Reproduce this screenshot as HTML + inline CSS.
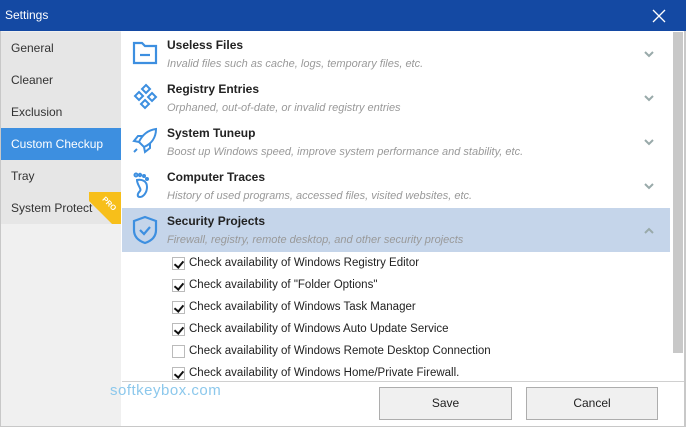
<!DOCTYPE html>
<html><head><meta charset="utf-8"><style>
*{margin:0;padding:0;box-sizing:border-box}
body{width:686px;height:427px;overflow:hidden;background:#fff;font-family:"Liberation Sans",sans-serif;position:relative}
.title{position:absolute;left:0;top:0;width:686px;height:31px;background:#1449a3;color:#fff;font-size:12px;line-height:31px;padding-left:5px}
.x{position:absolute;right:20px;top:9px;width:14px;height:14px}
.side{position:absolute;left:0;top:31px;width:121px;height:396px;background:#f0f0f0;border-left:1px solid #c8c8c8}
.si{height:32px;line-height:32px;padding-left:10px;font-size:12px;color:#333;background:#e6e6e6;position:relative;overflow:hidden}
.si.sel{background:#3d8fe0;color:#fff}
.tri{position:absolute;right:0;top:0;width:32px;height:32px;background:#f7bf1a;clip-path:polygon(0 0,100% 0,100% 100%,72% 100%,0 28%)}
.pro{position:absolute;right:-3px;top:7px;width:30px;transform:rotate(45deg);color:#fff;font-size:7.5px;line-height:10px;text-align:center;font-weight:bold}
.row{position:absolute;left:122px;width:548px;height:44px}
.row.sel{background:#c5d5ea}
.row h{position:absolute;left:45px;top:6px;font-weight:bold;font-size:12px;color:#222}
.row p{position:absolute;left:45px;top:26px;font-style:italic;font-size:11px;color:#999}
.row svg.ic{position:absolute;left:9px;top:7px}
.chev{position:absolute;left:522px;top:19px}
.cb{position:absolute;left:172px;font-size:11.5px;color:#222}
.cb i{position:absolute;left:0;top:2px;width:13px;height:13px;border:1px solid #bbb;background:#fff;font-style:normal;font-size:0}
.cb.k i::after{content:"";position:absolute;left:3px;top:1px;width:4px;height:7px;border:solid #111;border-width:0 2px 2px 0;transform:rotate(40deg)}
.cb span{position:absolute;left:17px;top:2px;white-space:nowrap}
.sb{position:absolute;left:673px;top:32px;width:10px;height:321px;background:#c8c8c8}
.foot{position:absolute;left:122px;top:381px;width:564px;height:1px;background:#d0d0d0}
.btn{position:absolute;top:387px;height:33px;border:1px solid #adadad;background:#f0f0f0;font-size:12px;text-align:center;line-height:31px;color:#222}
.wm{position:absolute;left:110px;top:382px;color:#8cc8ec;font-size:15px;letter-spacing:0.5px}
.br{position:absolute;right:0;top:31px;width:2px;height:396px;background:#c8c8c8}
.bb{position:absolute;left:0;bottom:0;width:686px;height:1px;background:#c8c8c8}
</style></head><body>
<div class="title">Settings
<svg class="x" viewBox="0 0 14 14"><path d="M1 1L13 13M13 1L1 13" stroke="#fff" stroke-width="1.3"/></svg></div>
<div class="side">
<div class="si" style="margin-top:1px">General</div>
<div class="si">Cleaner</div>
<div class="si">Exclusion</div>
<div class="si sel">Custom Checkup</div>
<div class="si">Tray</div>
<div class="si">System Protect<div class="tri"></div><div class="pro">PRO</div></div>
</div>
<div class="row" style="top:32px"><svg class="ic" width="28" height="28" viewBox="0 0 28 28" fill="none" stroke="#3d8fe0" stroke-width="2.2"><path d="M3 4h8l3 3h11v17H3z"/><path d="M9 16h10"/></svg><h>Useless Files</h><p>Invalid files such as cache, logs, temporary files, etc.</p><svg class="chev" width="10" height="7"><path d="M1 1l4 4 4-4" stroke="#9aa" stroke-width="2" fill="none"/></svg></div>
<div class="row" style="top:76px"><svg class="ic" width="28" height="28" viewBox="0 0 28 28" fill="none" stroke="#3d8fe0" stroke-width="2"><path d="M15 2l4 4-4 4-4-4z M8 9l4 4-4 4-4-4z M21 10l4 4-4 4-4-4z M14 17l4 4-4 4-4-4z"/></svg><h>Registry Entries</h><p>Orphaned, out-of-date, or invalid registry entries</p><svg class="chev" width="10" height="7"><path d="M1 1l4 4 4-4" stroke="#9aa" stroke-width="2" fill="none"/></svg></div>
<div class="row" style="top:120px"><svg class="ic" width="28" height="28" viewBox="0 0 28 28" fill="none" stroke="#3d8fe0" stroke-width="2"><path d="M25 2C17 3 11 8 8 15l5 5c7-3 12-9 12-18z M8 15l-5-1 4-5 5 0 M13 20l1 5 5-4 0-5 M6 22l-3 3"/></svg><h>System Tuneup</h><p>Boost up Windows speed, improve system performance and stability, etc.</p><svg class="chev" width="10" height="7"><path d="M1 1l4 4 4-4" stroke="#9aa" stroke-width="2" fill="none"/></svg></div>
<div class="row" style="top:164px"><svg class="ic" width="28" height="28" viewBox="0 0 28 28" fill="none" stroke="#3d8fe0" stroke-width="2"><circle cx="5" cy="4" r="1.5"/><circle cx="9" cy="4" r="1.2"/><circle cx="13" cy="5" r="1"/><circle cx="16" cy="8" r="1"/><path d="M6 9c5-1 10 1 10 7 0 6-4 10-7 10-3 0-3-3 0-6 2-2-3-6-3-11z"/></svg><h>Computer Traces</h><p>History of used programs, accessed files, visited websites, etc.</p><svg class="chev" width="10" height="7"><path d="M1 1l4 4 4-4" stroke="#9aa" stroke-width="2" fill="none"/></svg></div>
<div class="row sel" style="top:208px"><svg class="ic" width="28" height="30" viewBox="0 0 28 30" fill="none" stroke="#3d8fe0" stroke-width="2.2"><path d="M14 2L3 6v9c0 7 5 11 11 13 6-2 11-6 11-13V6z"/><path d="M9 15l4 4 6-7"/></svg><h>Security Projects</h><p>Firewall, registry, remote desktop, and other security projects</p><svg class="chev" width="10" height="7"><path d="M1 6l4-4 4 4" stroke="#9aa" stroke-width="2" fill="none"/></svg></div>
<div class="cb k" style="top:255px"><i></i><span>Check availability of Windows Registry Editor</span></div>
<div class="cb k" style="top:277px"><i></i><span>Check availability of "Folder Options"</span></div>
<div class="cb k" style="top:299px"><i></i><span>Check availability of Windows Task Manager</span></div>
<div class="cb k" style="top:321px"><i></i><span>Check availability of Windows Auto Update Service</span></div>
<div class="cb" style="top:343px"><i></i><span>Check availability of Windows Remote Desktop Connection</span></div>
<div class="cb k" style="top:365px"><i></i><span>Check availability of Windows Home/Private Firewall.</span></div>
<div class="sb"></div>
<div class="foot"></div>
<div class="wm">softkeybox.com</div>
<div class="btn" style="left:379px;width:133px">Save</div>
<div class="btn" style="left:526px;width:132px">Cancel</div>
<div class="br"></div><div class="bb"></div>
</body></html>
